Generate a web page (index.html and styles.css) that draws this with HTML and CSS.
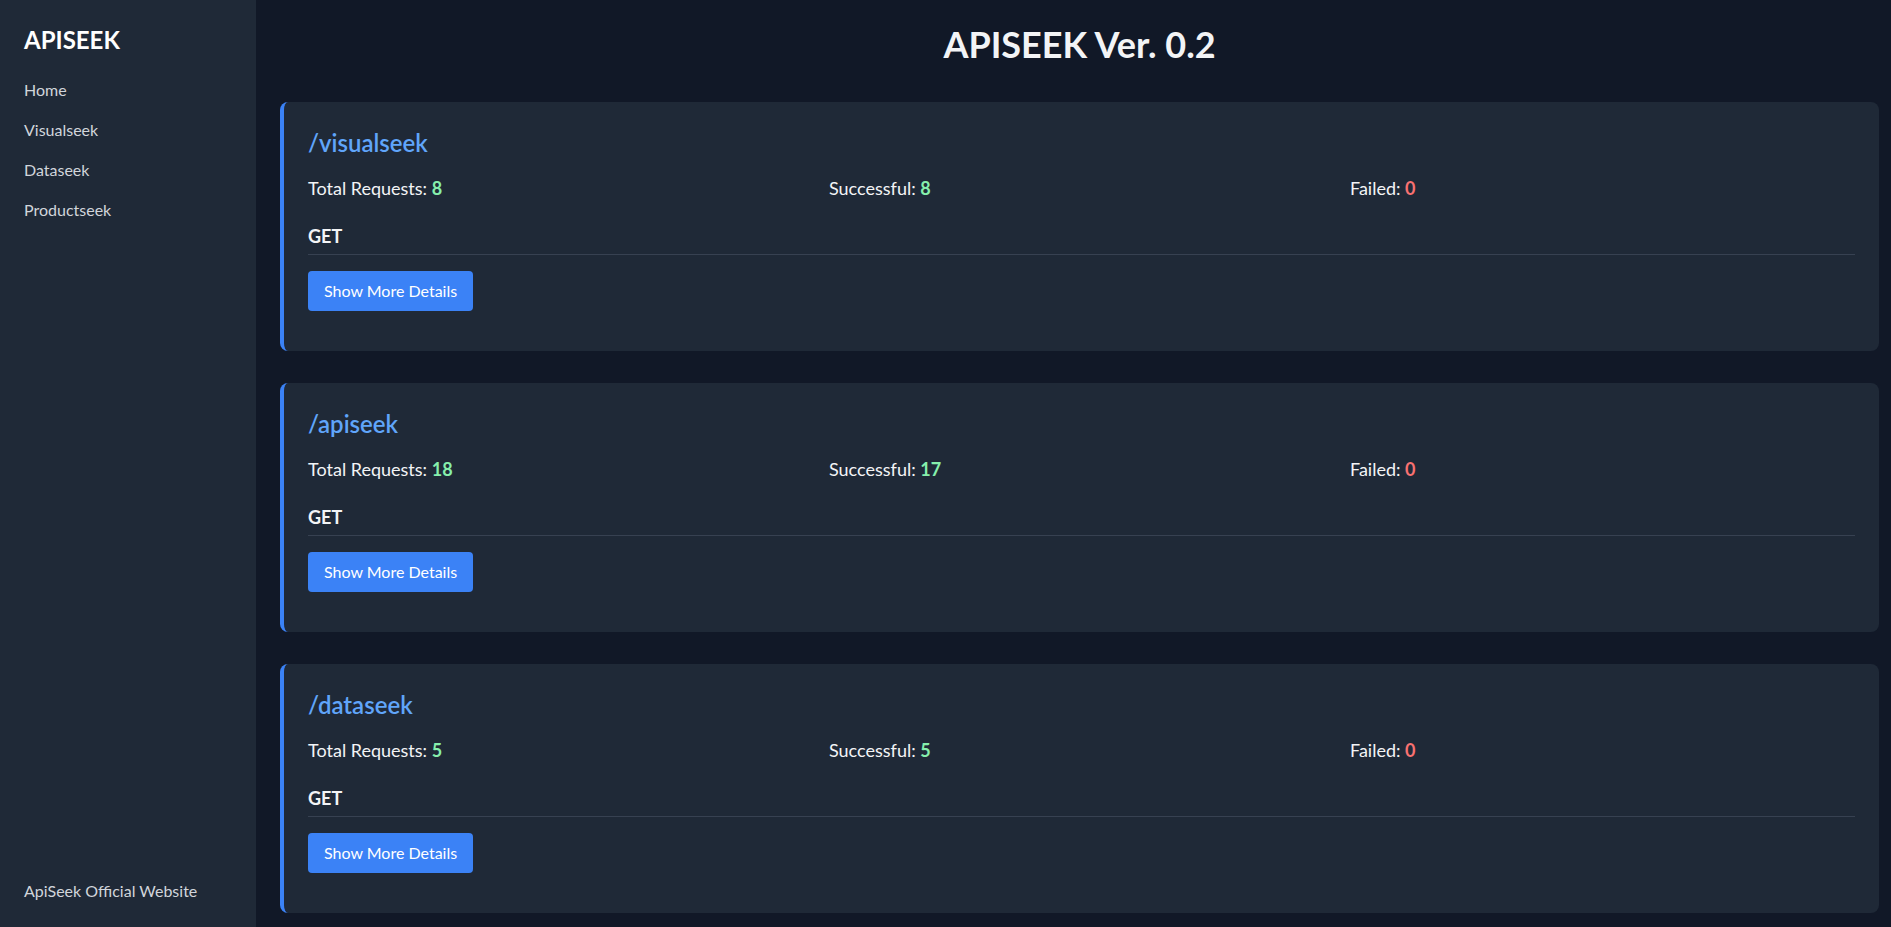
FILE: index.html
```html
<!DOCTYPE html>
<html lang="en">
<head>
<meta charset="utf-8">
<title>APISEEK</title>
<link rel="stylesheet" href="styles.css">
</head>
<body>
<div class="layout">
  <aside class="sidebar">
    <div class="brand">APISEEK</div>
    <nav class="nav">
      <a class="nav-link" href="#">Home</a>
      <a class="nav-link" href="#">Visualseek</a>
      <a class="nav-link" href="#">Dataseek</a>
      <a class="nav-link" href="#">Productseek</a>
    </nav>
    <a class="footer-link" href="#">ApiSeek Official Website</a>
  </aside>
  <main class="main">
    <h1 class="page-title">APISEEK Ver. 0.2</h1>

    <section class="card">
      <h2 class="card-title">/visualseek</h2>
      <div class="stats">
        <div class="stat">Total Requests: <span class="ok">8</span></div>
        <div class="stat">Successful: <span class="ok">8</span></div>
        <div class="stat">Failed: <span class="bad">0</span></div>
      </div>
      <div class="method">GET</div>
      <button class="btn">Show More Details</button>
    </section>

    <section class="card">
      <h2 class="card-title">/apiseek</h2>
      <div class="stats">
        <div class="stat">Total Requests: <span class="ok">18</span></div>
        <div class="stat">Successful: <span class="ok">17</span></div>
        <div class="stat">Failed: <span class="bad">0</span></div>
      </div>
      <div class="method">GET</div>
      <button class="btn">Show More Details</button>
    </section>

    <section class="card">
      <h2 class="card-title">/dataseek</h2>
      <div class="stats">
        <div class="stat">Total Requests: <span class="ok">5</span></div>
        <div class="stat">Successful: <span class="ok">5</span></div>
        <div class="stat">Failed: <span class="bad">0</span></div>
      </div>
      <div class="method">GET</div>
      <button class="btn">Show More Details</button>
    </section>
  </main>
</div>
</body>
</html>
```

FILE: styles.css
```css
* { box-sizing: border-box; }
html, body {
  margin: 0;
  height: 100%;
}
body {
  background: #111827;
  color: #f3f4f6;
  font-family: "Lato", "Liberation Sans", sans-serif;
  font-size: 16px;
  line-height: 24px;
  overflow: hidden;
}
.layout {
  display: flex;
  height: 927px;
}
.sidebar {
  width: 256px;
  flex: none;
  background: #1f2937;
  padding: 24px;
  display: flex;
  flex-direction: column;
}
.brand {
  font-size: 24px;
  line-height: 32px;
  font-weight: 700;
  color: #ffffff;
  margin-bottom: 14px;
}
.nav {
  display: flex;
  flex-direction: column;
}
.nav-link {
  display: block;
  padding: 8px 0;
  color: #d1d5db;
  text-decoration: none;
}
.footer-link {
  margin-top: auto;
  color: #d1d5db;
  text-decoration: none;
}
.main {
  flex: 1;
  padding: 24px 12px 24px 24px;
  overflow: hidden;
}
.page-title {
  margin: 0 0 38px;
  text-align: center;
  font-size: 36px;
  line-height: 40px;
  font-weight: 700;
  color: #f3f4f6;
}
.card {
  background: #1f2937;
  border-left: 4px solid #3b82f6;
  border-radius: 8px;
  padding: 24px 24px 40px;
  margin-bottom: 32px;
}
.card-title {
  margin: 0 0 14px;
  font-size: 24px;
  line-height: 34px;
  font-weight: 600;
  color: #60a5fa;
}
.stats {
  display: grid;
  grid-template-columns: repeat(3, 1fr);
  gap: 16px;
  margin-bottom: 20px;
  font-size: 18px;
  line-height: 28px;
}
.stat { color: #f3f4f6; }
.ok { color: #86efac; font-weight: 700; }
.bad { color: #f87171; font-weight: 700; }
.method {
  font-size: 18px;
  line-height: 28px;
  font-weight: 700;
  color: #f3f4f6;
  padding-bottom: 4px;
  border-bottom: 1px solid #374151;
  margin-bottom: 16px;
}
.btn {
  display: block;
  background: #3b82f6;
  color: #ffffff;
  border: 0;
  border-radius: 4px;
  padding: 8px 16px;
  font-family: inherit;
  font-size: 16px;
  line-height: 24px;
  cursor: pointer;
}
```
